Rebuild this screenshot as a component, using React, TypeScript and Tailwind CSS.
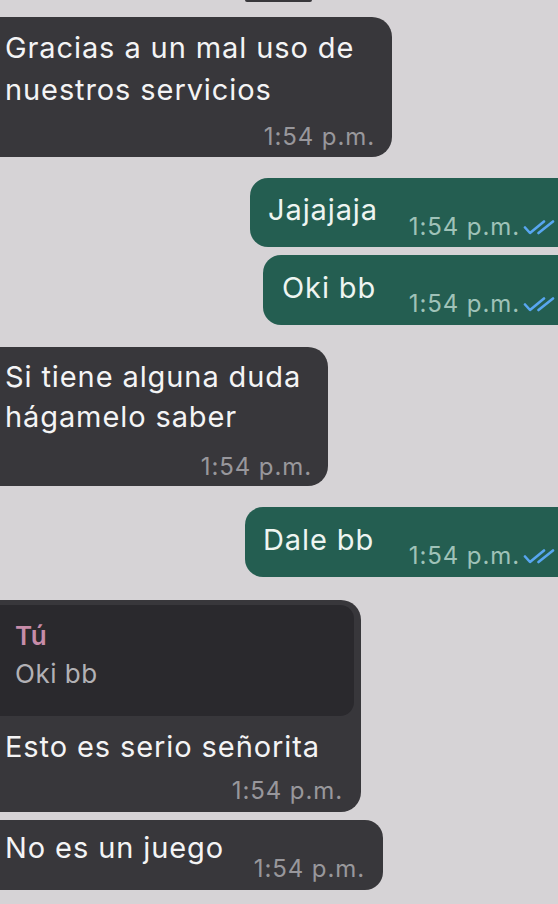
import React from "react";

const Checks = () => (
  <svg width="33" height="15" viewBox="0 0 33 15" fill="none" className="shrink-0">
    <path d="M2 7.5 L7 13 L21 1.5" stroke="#58a6f0" strokeWidth="2.6" strokeLinecap="round" strokeLinejoin="round" />
    <path d="M15.5 13 L30 1.5" stroke="#58a6f0" strokeWidth="2.6" strokeLinecap="round" strokeLinejoin="round" />
  </svg>
);

export default function App() {
  return (
    <div
      className="w-[558px] h-[904px] overflow-hidden bg-[#d6d3d6] flex flex-col"
      style={{ fontFamily: "Inter, 'Noto Sans', sans-serif" }}
    >
      {/* stub of previous bubble */}
      <div className="shrink-0 ml-[245px] w-[67px] h-[2px] rounded-b-[2px] bg-[#38373b]" />

      {/* Bubble 1 */}
      <div className="shrink-0 mt-[15px] ml-[-20px] w-[412px] h-[140px] rounded-[20px] bg-[#38373b] pl-[25px] pr-[17px] pt-[10px] flex flex-col">
        <div className="text-[29px] tracking-[0.9px] leading-[42px] text-[#f4f4f5]">
          Gracias a un mal uso de
          <br />
          nuestros servicios
        </div>
        <div className="mt-[12px] self-end text-[24px] leading-[28px] tracking-[0.9px] text-[#98979c]">1:54 p.m.</div>
      </div>

      {/* Green 1 */}
      <div className="shrink-0 mt-[21px] ml-[250px] w-[330px] h-[69px] rounded-[18px] bg-[#245e51] pl-[18px] pr-[24px] flex items-end">
        <div className="self-start pt-[11px] text-[29px] tracking-[0.9px] leading-[42px] text-[#eef5f1]">Jajajaja</div>
        <div className="ml-auto pb-[6px] flex items-center gap-[3px]">
          <span className="text-[24px] leading-[28px] tracking-[0.9px] text-[#9fc2b8]">1:54 p.m.</span>
          <Checks />
        </div>
      </div>

      {/* Green 2 */}
      <div className="shrink-0 mt-[8px] ml-[263px] w-[317px] h-[70px] rounded-[18px] bg-[#245e51] pl-[19px] pr-[24px] flex items-end">
        <div className="self-start pt-[12px] text-[29px] tracking-[0.9px] leading-[42px] text-[#eef5f1]">Oki bb</div>
        <div className="ml-auto pb-[7px] flex items-center gap-[3px]">
          <span className="text-[24px] leading-[28px] tracking-[0.9px] text-[#9fc2b8]">1:54 p.m.</span>
          <Checks />
        </div>
      </div>

      {/* Bubble 3 */}
      <div className="shrink-0 mt-[22px] ml-[-20px] w-[348px] h-[139px] rounded-[20px] bg-[#38373b] pl-[25px] pr-[16px] pt-[10px] flex flex-col">
        <div className="text-[29px] tracking-[0.9px] leading-[40px] text-[#f4f4f5]">
          Si tiene alguna duda
          <br />
          hágamelo saber
        </div>
        <div className="mt-[16px] self-end text-[24px] leading-[28px] tracking-[0.9px] text-[#98979c]">1:54 p.m.</div>
      </div>

      {/* Green 3 */}
      <div className="shrink-0 mt-[21px] ml-[245px] w-[335px] h-[70px] rounded-[18px] bg-[#245e51] pl-[18px] pr-[24px] flex items-end">
        <div className="self-start pt-[12px] text-[29px] tracking-[0.9px] leading-[42px] text-[#eef5f1]">Dale bb</div>
        <div className="ml-auto pb-[7px] flex items-center gap-[3px]">
          <span className="text-[24px] leading-[28px] tracking-[0.9px] text-[#9fc2b8]">1:54 p.m.</span>
          <Checks />
        </div>
      </div>

      {/* Bubble 4 with quote */}
      <div className="shrink-0 mt-[23px] ml-[-20px] w-[381px] h-[212px] rounded-[20px] bg-[#38373b] pt-[5px] pr-[7px] flex flex-col">
        <div className="h-[111px] rounded-[14px] bg-[#2a292d] pl-[35px] pt-[14px] flex flex-col">
          <div className="text-[26px] leading-[34px] font-semibold tracking-[0.5px] text-[#c78ca9]">Tú</div>
          <div className="mt-[4px] text-[26px] leading-[34px] tracking-[0.5px] text-[#b2b1b5]">Oki bb</div>
        </div>
        <div className="pl-[25px] pt-[10px] text-[29px] tracking-[0.9px] leading-[42px] text-[#f4f4f5]">Esto es serio señorita</div>
        <div className="self-end pr-[11px] mt-[9px] text-[24px] leading-[28px] tracking-[0.9px] text-[#98979c]">1:54 p.m.</div>
      </div>

      {/* Bubble 5 */}
      <div className="shrink-0 mt-[8px] ml-[-20px] w-[403px] h-[70px] rounded-[18px] bg-[#38373b] pl-[25px] pr-[18px] flex items-end">
        <div className="self-start pt-[7px] text-[29px] tracking-[0.9px] leading-[42px] text-[#f4f4f5]">No es un juego</div>
        <div className="ml-auto pb-[7px] text-[24px] leading-[28px] tracking-[0.9px] text-[#98979c]">1:54 p.m.</div>
      </div>
    </div>
  );
}
